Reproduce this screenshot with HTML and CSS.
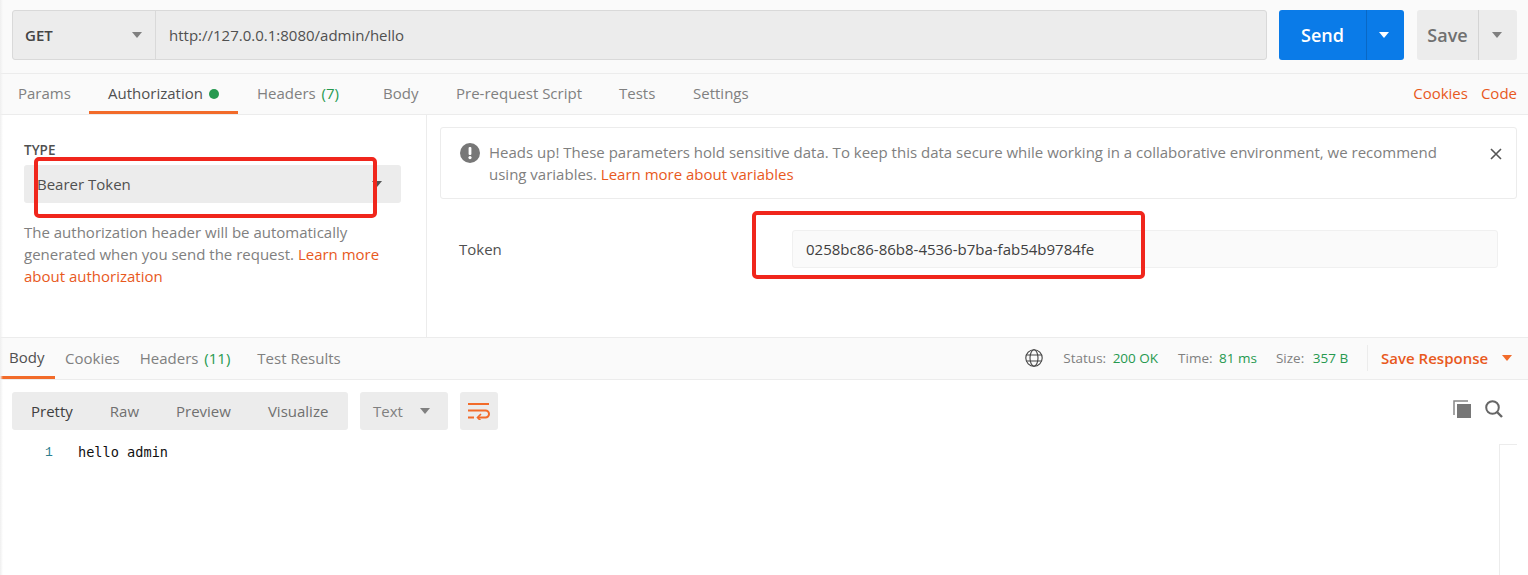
FILE: index.html
```html
<!DOCTYPE html>
<html lang="en">
<head>
<meta charset="utf-8">
<title>Postman request</title>
<link rel="stylesheet" href="styles.css">
</head>
<body>
<div class="app">
  <section class="request-bar">
    <div class="url-group">
      <div class="method"><span>GET</span><i class="caret caret-grey"></i></div>
      <div class="url">http://127.0.0.1:8080/admin/hello</div>
    </div>
    <div class="send"><span class="send-label">Send</span><span class="send-arrow"><i class="caret caret-white"></i></span></div>
    <div class="save"><span class="save-label">Save</span><span class="save-arrow"><i class="caret caret-grey"></i></span></div>
  </section>

  <nav class="req-tabs">
    <a class="tab t-params">Params</a>
    <a class="tab t-auth active">Authorization <b class="dot"></b></a>
    <a class="tab t-headers">Headers <em>(7)</em></a>
    <a class="tab t-body">Body</a>
    <a class="tab t-pre">Pre-request Script</a>
    <a class="tab t-tests">Tests</a>
    <a class="tab t-settings">Settings</a>
    <span class="tab-links"><a>Cookies</a><a>Code</a></span>
  </nav>

  <section class="auth">
    <div class="auth-left">
      <div class="type-label">TYPE</div>
      <div class="type-select"><span>Bearer Token</span><i class="caret caret-dark"></i></div>
      <p class="type-help">The authorization header will be automatically generated when you send the request. <a>Learn more about authorization</a></p>
    </div>
    <div class="auth-right">
      <div class="notice">
        <svg class="notice-icon" viewBox="0 0 20 20" width="20" height="20"><circle cx="10" cy="10" r="10" fill="#777"/><rect x="8.6" y="4" width="2.8" height="8" rx="1" fill="#fff"/><circle cx="10" cy="14.6" r="1.6" fill="#fff"/></svg>
        <p>Heads up! These parameters hold sensitive data. To keep this data secure while working in a collaborative environment, we recommend using variables. <a>Learn more about variables</a></p>
        <svg class="notice-close" viewBox="0 0 12 12" width="12" height="12"><path d="M1 1l10 10M11 1L1 11" stroke="#555" stroke-width="1.6" fill="none"/></svg>
      </div>
      <div class="token-row">
        <label>Token</label>
        <div class="token-input">0258bc86-86b8-4536-b7ba-fab54b9784fe</div>
      </div>
    </div>
  </section>

  <nav class="res-tabs">
    <a class="rtab active">Body</a>
    <a class="rtab">Cookies</a>
    <a class="rtab">Headers <em>(11)</em></a>
    <a class="rtab rtab-test">Test Results</a>
    <div class="res-meta">
      <svg class="globe" viewBox="0 0 18 18" width="18" height="18" fill="none" stroke="#444" stroke-width="1.1"><circle cx="9" cy="9" r="8.2"/><ellipse cx="9" cy="9" rx="4" ry="8.2"/><path d="M1.6 6h14.8M1.6 12h14.8"/></svg>
      <span class="stat stat-status">Status: <em>200 OK</em></span>
      <span class="stat">Time: <em>81 ms</em></span>
      <span class="stat stat-size">Size: <em>357 B</em></span>
      <span class="save-response">Save Response <i class="caret caret-orange"></i></span>
    </div>
  </nav>

  <section class="res-tools">
    <div class="view-modes"><span class="mode cur">Pretty</span><span class="mode">Raw</span><span class="mode">Preview</span><span class="mode">Visualize</span></div>
    <div class="format"><span>Text</span><i class="caret caret-grey"></i></div>
    <div class="wrap">
      <svg viewBox="0 0 22 18" width="22" height="18" fill="none" stroke="#f26b2a" stroke-width="2"><path d="M0 2h21M0 15.500h6M0 8.500h17.500a3.500 3.500 0 0 1 0 7H10"/><path d="M13 12l-3.500 3.500L13 19" stroke-width="1.600"/></svg>
    </div>
    <div class="tool-icons">
      <svg viewBox="0 0 18 18" width="18" height="18"><path d="M1 15V1h14" fill="none" stroke="#888" stroke-width="1.500"/><rect x="4" y="4" width="14" height="14" fill="#777"/></svg>
      <svg viewBox="0 0 18 18" width="18" height="18" fill="none" stroke="#666" stroke-width="2"><circle cx="7.500" cy="7.500" r="6.300"/><path d="M12 12l5 5" stroke-width="2.400"/></svg>
    </div>
  </section>

  <section class="code">
    <span class="ln">1</span><code>hello admin</code>
    <div class="scroll-track"></div>
  </section>

  <div class="edge"></div>
  <div class="mark mark-type"></div>
  <div class="mark mark-token"></div>
</div>
</body>
</html>
```

FILE: styles.css
```css
* { box-sizing: border-box; }
html, body { margin: 0; padding: 0; height: 100%; background: #fff; overflow: hidden; }
body { font-family: "Open Sans", "Liberation Sans", sans-serif; font-size: 15px; color: #808080; }
a { color: inherit; text-decoration: none; }
em { font-style: normal; color: #26994f; }
p { margin: 0; }

.app { position: relative; width: 1528px; height: 575px; overflow: hidden; }
.edge { position: absolute; left: 0; top: 0; bottom: 0; width: 3px; background: linear-gradient(to right, #efefef, rgba(240,240,240,0)); }

.caret { display: inline-block; width: 0; height: 0; border-left: 5px solid transparent; border-right: 5px solid transparent; border-top: 6px solid #808080; }
.caret-white { border-top-color: #fff; }
.caret-dark { border-top-color: #555; }
.caret-orange { border-top-color: #f26b2a; }

.request-bar { display: flex; height: 74px; padding: 10px 11px 0 12px; background: #fafafa; border-bottom: 1px solid #ececec; }
.url-group { display: flex; width: 1255px; height: 50px; border: 1px solid #d9d9d9; border-radius: 3px; background: #ececec; }
.method { display: flex; align-items: center; justify-content: space-between; width: 143px; padding: 0 13px 0 12px; border-right: 1px solid #d9d9d9; font-weight: 600; color: #444; }
.url { flex: 1; display: flex; align-items: center; padding-left: 13px; color: #505050; }
.send { display: flex; width: 125px; height: 50px; margin-left: 12px; border-radius: 3px; background: #0a7be8; color: #fff; font-size: 18px; font-weight: 600; }
.send-label { width: 87px; display: flex; align-items: center; justify-content: center; }
.send-arrow { flex: 1; display: flex; align-items: center; justify-content: center; padding-right: 3px; border-left: 1px solid #0968c5; }
.save { display: flex; width: 100px; height: 50px; margin-left: 13px; border-radius: 3px; background: #ececec; color: #707070; font-size: 18px; font-weight: 600; }
.save-label { width: 61px; display: flex; align-items: center; justify-content: center; }
.save-arrow { flex: 1; display: flex; align-items: center; justify-content: center; padding-right: 2px; border-left: 1px solid #d4d4d4; }

.req-tabs { display: flex; align-items: stretch; height: 41px; background: #fafafa; border-bottom: 1px solid #ececec; position: relative; }
.tab { display: flex; align-items: center; white-space: pre; height: 40px; padding-bottom: 2px; color: #808080; }
.tab em { margin-left: 2px; }
.t-params { margin-left: 18px; width: 71px; }
.t-auth { width: 149px; padding-left: 19px; color: #505050; border-bottom: 3px solid #f26b2a; padding-bottom: 0; }
.t-headers { margin-left: 19px; width: 126px; }
.t-body { width: 73px; }
.t-pre { width: 163px; }
.t-tests { width: 74px; }
.t-settings { width: 60px; }
.dot { display: inline-block; width: 10px; height: 10px; border-radius: 50%; background: #26994f; margin-left: 2px; margin-top: 2px; }
.tab-links { margin-left: auto; display: flex; align-items: center; gap: 13px; padding: 0 11px 2px 0; height: 40px; color: #e8591d; }

.auth { display: flex; height: 223px; background: #fff; border-bottom: 1px solid #ececec; }
.auth-left { width: 427px; padding: 27px 25px 0 24px; border-right: 1px solid #ececec; }
.type-label { font-size: 13.5px; font-weight: 600; color: #505050; line-height: 16px; }
.type-select { display: flex; align-items: center; justify-content: space-between; height: 38px; margin-top: 7px; padding: 0 19px 0 13px; border-radius: 3px; background: #ececec; color: #505050; }
.type-help { margin-top: 18px; line-height: 22px; color: #808080; }
.type-help a, .notice a { color: #e8591d; }
.auth-right { flex: 1; padding: 12px 11px 0 13px; }
.notice { display: flex; height: 72px; padding: 13px 0 0 19px; border: 1px solid #ececec; border-radius: 3px; position: relative; }
.notice-icon { flex: none; margin-top: 2px; }
.notice p { margin-left: 9px; width: 970px; line-height: 22px; color: #808080; }
.notice-close { position: absolute; right: 14px; top: 20px; }
.token-row { display: flex; align-items: center; margin-top: 31px; padding-left: 19px; padding-right: 19px; color: #505050; }
.token-row label { width: 333px; }
.token-input { flex: 1; height: 38px; display: flex; align-items: center; padding-left: 13px; background: #fafafa; border: 1px solid #f0f0f0; border-radius: 3px; color: #404040; }

.res-tabs { display: flex; align-items: stretch; height: 42px; background: #fafafa; border-bottom: 1px solid #ececec; }
.rtab { display: flex; align-items: center; white-space: pre; height: 41px; padding: 0 10px 2px; color: #808080; }
.rtab em { margin-left: 2px; }
.rtab.active { width: 55px; padding: 0 0 0 9px; color: #505050; border-bottom: 3px solid #f26b2a; }
.rtab-test { margin-left: 7px; }
.res-meta { margin-left: auto; display: flex; align-items: center; height: 41px; padding-bottom: 1px; font-size: 13.5px; color: #808080; white-space: pre; }
.res-meta em { margin-left: 3px; }
.res-meta .stat-size em { margin-left: 5px; }
.globe { margin-right: 20px; }
.stat { margin-right: 19px; }
.stat-status { margin-right: 20px; }
.save-response { display: flex; align-items: center; height: 26px; padding: 0 16px 0 13px; border-left: 1px solid #ececec; color: #e8591d; font-size: 15px; font-weight: 600; }
.save-response .caret { margin-left: 10px; }

.res-tools { display: flex; align-items: flex-start; padding: 12px 12px 0; height: 64px; position: relative; }
.view-modes { display: flex; align-items: center; width: 336px; height: 38px; padding-left: 19px; background: #ececec; border-radius: 3px; color: #707070; }
.mode { margin-right: 37px; }
.mode.cur { color: #404040; }
.format { display: flex; align-items: center; justify-content: space-between; width: 88px; height: 38px; margin-left: 12px; padding: 0 18px 0 13px; background: #ececec; border-radius: 3px; color: #808080; }
.wrap { display: flex; align-items: center; justify-content: center; width: 38px; height: 38px; margin-left: 12px; background: #ececec; border-radius: 3px; }
.tool-icons { margin-left: auto; display: flex; align-items: center; gap: 14px; height: 34px; padding-right: 13px; }

.code { position: relative; height: 132px; padding-left: 45px; display: flex; align-items: flex-start; }
.ln { width: 33px; font-family: "Liberation Mono", monospace; font-size: 13px; line-height: 17px; color: #2f7f8f; }
.code code { font-family: "DejaVu Sans Mono", monospace; font-size: 13.6px; line-height: 17px; color: #111; }
.scroll-track { position: absolute; left: 1499px; top: 0; bottom: 0; width: 18px; border-left: 1px solid #ececec; border-top: 1px solid #ececec; }

.mark { position: absolute; border: 4px solid #f0261c; border-radius: 5px; pointer-events: none; }
.mark-type { left: 34px; top: 157px; width: 343px; height: 61px; }
.mark-token { left: 752px; top: 211px; width: 393px; height: 68px; }
```
